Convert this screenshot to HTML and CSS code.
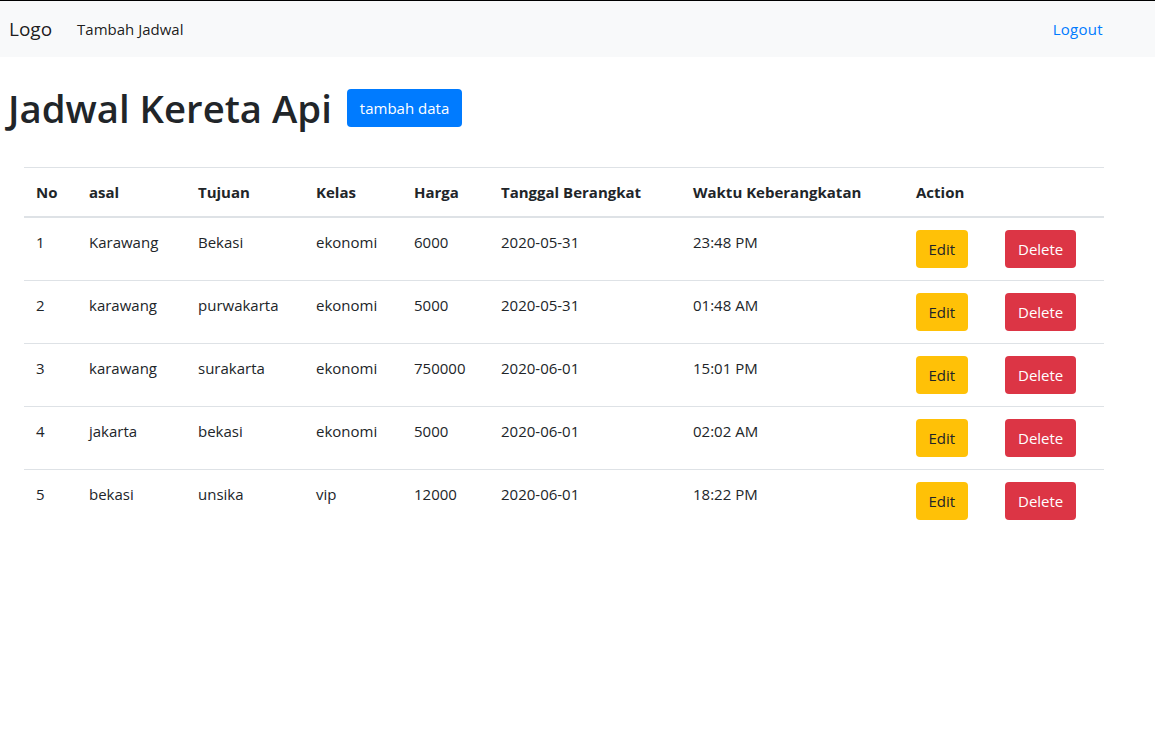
FILE: index.html
```html
<!DOCTYPE html>
<html>
<head>
<meta charset="utf-8">
<link rel="stylesheet" href="styles.css">
</head>
<body>
<nav class="navbar">
  <a class="brand" href="#">Logo</a>
  <a class="nav-link" href="#">Tambah Jadwal</a>
  <a class="nav-link logout" href="#">Logout</a>
</nav>
<div class="page">
  <div class="title-row">
    <h1>Jadwal Kereta Api</h1>
    <a class="btn btn-primary" href="#">tambah data</a>
  </div>
  <table class="table">
    <colgroup>
      <col style="width:53px"><col style="width:109px"><col style="width:118px"><col style="width:98px"><col style="width:87px"><col style="width:192px"><col style="width:223px"><col style="width:89px"><col style="width:111px">
    </colgroup>
    <thead>
      <tr><th>No</th><th>asal</th><th>Tujuan</th><th>Kelas</th><th>Harga</th><th>Tanggal Berangkat</th><th>Waktu Keberangkatan</th><th>Action</th><th></th></tr>
    </thead>
    <tbody>
      <tr><td>1</td><td>Karawang</td><td>Bekasi</td><td>ekonomi</td><td>6000</td><td>2020-05-31</td><td>23:48 PM</td><td><a class="btn btn-warning" href="#">Edit</a></td><td><a class="btn btn-danger" href="#">Delete</a></td></tr>
      <tr><td>2</td><td>karawang</td><td>purwakarta</td><td>ekonomi</td><td>5000</td><td>2020-05-31</td><td>01:48 AM</td><td><a class="btn btn-warning" href="#">Edit</a></td><td><a class="btn btn-danger" href="#">Delete</a></td></tr>
      <tr><td>3</td><td>karawang</td><td>surakarta</td><td>ekonomi</td><td>750000</td><td>2020-06-01</td><td>15:01 PM</td><td><a class="btn btn-warning" href="#">Edit</a></td><td><a class="btn btn-danger" href="#">Delete</a></td></tr>
      <tr><td>4</td><td>jakarta</td><td>bekasi</td><td>ekonomi</td><td>5000</td><td>2020-06-01</td><td>02:02 AM</td><td><a class="btn btn-warning" href="#">Edit</a></td><td><a class="btn btn-danger" href="#">Delete</a></td></tr>
      <tr><td>5</td><td>bekasi</td><td>unsika</td><td>vip</td><td>12000</td><td>2020-06-01</td><td>18:22 PM</td><td><a class="btn btn-warning" href="#">Edit</a></td><td><a class="btn btn-danger" href="#">Delete</a></td></tr>
    </tbody>
  </table>
</div>
</body>
</html>
```
FILE: styles.css
```css
* { box-sizing: border-box; }
html, body { margin: 0; padding: 0; }
body {
  font-family: "Open Sans", "Noto Sans", sans-serif;
  font-size: 15px;
  line-height: 24px;
  color: #212529;
  background: #fff;
}
a { text-decoration: none; }
.navbar {
  display: flex;
  align-items: center;
  height: 57px;
  border-top: 1px solid #000;
  background: #f8f9fa;
  padding: 0 44px 0 9px;
}
.brand {
  font-size: 19px;
  line-height: 30px;
  color: rgba(0,0,0,.9);
  margin-right: 17px;
}
.nav-link {
  padding: 8px;
  color: rgba(0,0,0,.9);
}
.logout {
  margin-left: auto;
  color: #007bff;
  letter-spacing: 0.3px;
}
.page { padding: 0 0 0 8px; }
.title-row {
  display: flex;
  align-items: center;
  margin-top: 27px;
}
h1 {
  margin: 0 15px 0 0;
  font-size: 38.3px;
  font-weight: 600;
  line-height: 48px;
}
.btn {
  display: inline-block;
  padding: 6px 12px;
  border: 1px solid transparent;
  border-radius: 4px;
  font-size: 15px;
  line-height: 24px;
  text-align: center;
}
.btn-primary { background: #007bff; color: #fff; }
.btn-warning { background: #ffc107; color: #212529; padding: 6px 11.5px; }
.btn-danger { background: #dc3545; color: #fff; }
.table {
  margin: 35px 0 0 16px;
  width: 1080px;
  table-layout: fixed;
  border-collapse: collapse;
}
.table th, .table td {
  padding: 12px;
  text-align: left;
  vertical-align: top;
  border-top: 1px solid #dee2e6;
}
.table th { font-weight: 700; }
.table thead th { border-bottom: 2px solid #dee2e6; vertical-align: bottom; }
```
